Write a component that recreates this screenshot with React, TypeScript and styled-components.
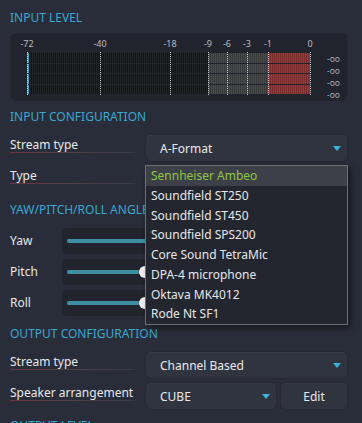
import React from 'react'
import styled, { createGlobalStyle } from 'styled-components'

const GlobalStyle = createGlobalStyle`
  html, body {
    margin: 0;
    padding: 0;
    background: #292d39;
  }
  body {
    font-family: 'Noto Sans', 'Open Sans', sans-serif;
    overflow: hidden;
  }
`

const Page = styled.div`
  width: 362px;
  height: 423px;
  box-sizing: border-box;
  padding: 10px 15px 0 10px;
  display: flex;
  flex-direction: column;
`

const Heading = styled.div<{ $top?: number }>`
  margin-top: ${(p) => p.$top ?? 0}px;
  height: 16px;
  line-height: 16px;
  font-size: 12px;
  color: #3aa7cf;
  text-transform: uppercase;
  white-space: nowrap;
`

/* ---------- meter ---------- */

const MeterPanel = styled.div`
  margin: 8px 0 0 1px;
  height: 68px;
  background: #21242d;
  border-radius: 5px;
  display: flex;
  padding-left: 16px;
  box-shadow: 0 0 0 1px #252833;
`

const MeterMain = styled.div`
  width: 284px;
  display: flex;
  flex-direction: column;
`

const Scale = styled.div`
  position: relative;
  height: 19px;
`

const ScaleLabel = styled.span`
  position: absolute;
  top: 4px;
  transform: translateX(-50%);
  font-size: 9px;
  line-height: 12px;
  color: #b9bcc2;
`

const Bars = styled.div`
  position: relative;
  height: 41px;
  display: flex;
  flex-direction: column;
  gap: 1px;
`

const BarRow = styled.div`
  flex: 1;
  display: flex;
`

const Segment = styled.div<{ $w: number; $a: string; $b: string }>`
  width: ${(p) => p.$w}px;
  background: repeating-linear-gradient(
    90deg,
    ${(p) => p.$a} 0 1px,
    ${(p) => p.$b} 1px 2px
  );
`

const Level = styled.div`
  width: 2px;
  background: #37a3c4;
`

const Tick = styled.div`
  position: absolute;
  top: -1px;
  bottom: -1px;
  width: 0;
  border-left: 1px dotted #c9ccd0;
`

const Readouts = styled.div`
  margin-left: auto;
  padding: 19px 7px 0 0;
  display: flex;
  flex-direction: column;
  height: 47px;
`

const Readout = styled.div`
  flex: 1;
  display: flex;
  align-items: center;
  justify-content: flex-end;
  font-size: 8.5px;
  color: #a9adb4;
`

/* ---------- rows ---------- */

const Rows = styled.div<{ $top?: number }>`
  margin-top: ${(p) => p.$top ?? 10}px;
  display: flex;
  flex-direction: column;
  gap: 5px;
`

const Row = styled.div<{ $label?: number }>`
  display: grid;
  grid-template-columns: ${(p) => p.$label ?? 136}px 1fr;
  align-items: center;
  height: 26px;
`

const Label = styled.span<{ $line?: boolean }>`
  justify-self: start;
  font-size: 12px;
  line-height: 14px;
  color: #e6e7ea;
  white-space: nowrap;
  ${(p) =>
    p.$line
      ? `
    width: 125px;
    margin-bottom: 5px;
    border-bottom: 1px solid;
    border-image: linear-gradient(90deg, #6e3543, #4e3f4a 55%, #363a46) 1;
  `
      : ''}
`

const Field = styled.div`
  position: relative;
  display: flex;
  gap: 5px;
  height: 26px;
`

const Select = styled.div`
  flex: 1;
  display: flex;
  align-items: center;
  padding: 0 6px 0 14px;
  background: #30343f;
  border-radius: 5px;
  box-shadow: 0 0 0 1px #262933, inset 0 1px 0 #363a46;
  font-size: 12px;
  color: #e8e9ec;
`

const Arrow = styled.span`
  margin-left: auto;
  width: 0;
  height: 0;
  border-left: 4px solid transparent;
  border-right: 4px solid transparent;
  border-top: 5px solid #3ab3dc;
`

const Button = styled.div`
  width: 66px;
  display: flex;
  align-items: center;
  justify-content: center;
  background: #30343f;
  border-radius: 5px;
  box-shadow: 0 0 0 1px #262933, inset 0 1px 0 #363a46;
  font-size: 12px;
  color: #e8e9ec;
`

/* ---------- popup ---------- */

const Popup = styled.div`
  position: absolute;
  top: -1px;
  left: -1px;
  right: -1px;
  z-index: 10;
  background: #23262f;
  border: 1px solid #6c6e74;
  box-shadow: 3px 3px 6px rgba(0, 0, 0, 0.45);
`

const Option = styled.div<{ $active?: boolean }>`
  height: 19.75px;
  line-height: 19.75px;
  padding-left: 5px;
  font-size: 12px;
  color: ${(p) => (p.$active ? '#8dc63f' : '#e6e7ea')};
  background: ${(p) => (p.$active ? '#3d4049' : 'transparent')};
`

/* ---------- slider ---------- */

const SliderBox = styled.div`
  height: 26px;
  background: #21242d;
  border-radius: 5px;
  display: flex;
  align-items: center;
  padding: 0 10px 0 5px;
`

const Track = styled.div`
  position: relative;
  flex: 1;
  height: 4px;
  border-radius: 2px;
  background: #4a4e5a;
`

const Fill = styled.div`
  height: 100%;
  border-radius: 2px;
  background: #3e8fa4;
`

const Handle = styled.div`
  position: absolute;
  top: 50%;
  width: 12px;
  height: 12px;
  margin: -6px 0 0 -6px;
  border-radius: 50%;
  background: #f2f2f2;
`

const scale = [
  { t: '-72', x: 0 },
  { t: '-40', x: 73 },
  { t: '-18', x: 143 },
  { t: '-9', x: 181 },
  { t: '-6', x: 200 },
  { t: '-3', x: 220 },
  { t: '-1', x: 241 },
  { t: '0', x: 283 },
]

const micros = [
  'Sennheiser Ambeo',
  'Soundfield ST250',
  'Soundfield ST450',
  'Soundfield SPS200',
  'Core Sound TetraMic',
  'DPA-4 microphone',
  'Oktava MK4012',
  'Rode Nt SF1',
]

const Slider = ({ value }: { value: number }) => (
  <SliderBox>
    <Track>
      <Fill style={{ width: value }} />
      <Handle style={{ left: value + 6 }} />
    </Track>
  </SliderBox>
)

export default function App() {
  return (
    <Page>
      <GlobalStyle />
      <Heading>Input Level</Heading>
      <MeterPanel>
        <MeterMain>
          <Scale>
            {scale.map((s) => (
              <ScaleLabel key={s.t} style={{ left: s.x }}>
                {s.t}
              </ScaleLabel>
            ))}
          </Scale>
          <Bars>
            {[0, 1, 2, 3].map((i) => (
              <BarRow key={i}>
                <Level />
                <Segment $w={179} $a="#131416" $b="#222326" />
                <Segment $w={60} $a="#38393b" $b="#4a4b4d" />
                <Segment $w={42} $a="#7b2b2c" $b="#983a3a" />
              </BarRow>
            ))}
            {scale.map((s) => (
              <Tick key={s.t} style={{ left: s.x }} />
            ))}
          </Bars>
        </MeterMain>
        <Readouts>
          {[0, 1, 2, 3].map((i) => (
            <Readout key={i}>-oo</Readout>
          ))}
        </Readouts>
      </MeterPanel>

      <Heading $top={9}>Input Configuration</Heading>
      <Rows>
        <Row>
          <Label $line>Stream type</Label>
          <Field>
            <Select>
              A-Format
              <Arrow />
            </Select>
          </Field>
        </Row>
        <Row>
          <Label $line>Type</Label>
          <Field>
            <Select>
              <Arrow />
            </Select>
            <Popup>
              {micros.map((m, i) => (
                <Option key={m} $active={i === 0}>
                  {m}
                </Option>
              ))}
            </Popup>
          </Field>
        </Row>
      </Rows>

      <Heading $top={10}>Yaw/Pitch/Roll Angles</Heading>
      <Rows>
        <Row $label={52}>
          <Label>Yaw</Label>
          <Slider value={150} />
        </Row>
        <Row $label={52}>
          <Label>Pitch</Label>
          <Slider value={72} />
        </Row>
        <Row $label={52}>
          <Label>Roll</Label>
          <Slider value={72} />
        </Row>
      </Rows>

      <Heading $top={10}>Output Configuration</Heading>
      <Rows>
        <Row>
          <Label $line>Stream type</Label>
          <Field>
            <Select>
              Channel Based
              <Arrow />
            </Select>
          </Field>
        </Row>
        <Row>
          <Label $line>Speaker arrangement</Label>
          <Field>
            <Select>
              CUBE
              <Arrow />
            </Select>
            <Button>Edit</Button>
          </Field>
        </Row>
      </Rows>

      <Heading $top={9}>Output Level</Heading>
    </Page>
  )
}
